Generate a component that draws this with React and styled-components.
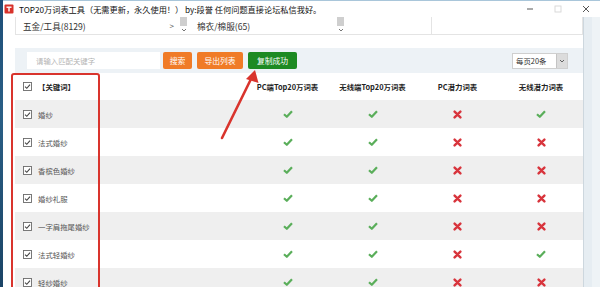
import styled, { createGlobalStyle } from "styled-components";

const GlobalStyle = createGlobalStyle`
  html, body {
    margin: 0;
    padding: 0;
    background: #ffffff;
  }
  body {
    font-family: "Noto Sans CJK SC", "Noto Sans", sans-serif;
    color: #333;
  }
`;

const Screen = styled.div`
  position: relative;
  display: flex;
  width: 600px;
  height: 287px;
  overflow: hidden;
`;

const Desktop = styled.div`
  width: 3px;
  background: linear-gradient(#1e4e78, #2a5f86 40%, #1b4466);
`;

const Window = styled.div`
  flex: 1;
  display: flex;
  flex-direction: column;
  background: #fff;
  border-top: 1px solid #a9c6da;
`;

const TitleBar = styled.div`
  flex-shrink: 0;
  height: 16px;
  display: flex;
  align-items: center;
  padding-left: 1px;
`;

const Title = styled.span`
  margin-left: 5px;
  font-size: 8.2px;
  color: #111;
  white-space: nowrap;
`;

const Controls = styled.div`
  margin-left: auto;
  display: flex;
  align-items: center;
  gap: 20px;
  padding-right: 10px;
`;

const Main = styled.div`
  flex: 1;
  display: flex;
  min-height: 0;
`;

const Content = styled.div`
  flex: 1;
  display: flex;
  flex-direction: column;
  padding-left: 12px;
  min-height: 0;
`;

const Gutter = styled.div`
  width: 16px;
  background: #e6edf2;
  border-left: 1px solid #cdd7de;
  box-shadow: inset -8px 0 0 #eef3f6;
`;

const CategoryBar = styled.div`
  flex-shrink: 0;
  height: 18px;
  display: flex;
  border: 1px solid #e4e4e4;
  border-top: none;
  box-sizing: border-box;
`;

const CategoryCol = styled.div`
  width: ${({ w }) => w}px;
  display: flex;
  align-items: center;
  padding-left: ${({ pad }) => pad || 0}px;
  box-sizing: border-box;
  border-right: ${({ line }) => (line ? "1px solid #e4e4e4" : "none")};
  font-size: 8.6px;
  color: #333;
`;

const Next = styled.span`
  margin-left: auto;
  margin-right: 6px;
  font-size: 8px;
  color: #555;
`;

const ScrollTrack = styled.div`
  align-self: stretch;
  width: 7px;
  margin-left: ${({ auto }) => (auto ? "auto" : "0")};
  margin-right: 1px;
  display: flex;
  flex-direction: column;
  align-items: center;
  justify-content: space-between;
  padding-bottom: 2px;
  box-sizing: border-box;
`;

const Thumb = styled.div`
  width: 7px;
  height: 9px;
  background: #cfcfcf;
`;

const Toolbar = styled.div`
  flex-shrink: 0;
  margin-top: 13px;
  height: 25px;
  display: flex;
  align-items: center;
  padding: 0 15px 0 12px;
  background: #edf2f6;
`;

const SearchInput = styled.div`
  width: 133px;
  height: 17px;
  box-sizing: border-box;
  background: #fff;
  display: flex;
  align-items: center;
  padding-left: 9px;
  font-size: 7.4px;
  color: #b3b3b3;
  margin-right: 3px;
`;

const Button = styled.div`
  width: ${({ w }) => w}px;
  height: 17px;
  margin-left: ${({ gap }) => gap || 0}px;
  display: flex;
  align-items: center;
  justify-content: center;
  border-radius: 2px;
  font-size: 7.8px;
  color: #fff;
  background: ${({ green }) => (green ? "#1d8a22" : "#f07b27")};
`;

const PageSelect = styled.div`
  margin-left: auto;
  display: flex;
  height: 14px;
  border: 1px solid #cfcfcf;
  background: #fff;
`;

const SelectText = styled.span`
  width: 40px;
  padding-left: 3px;
  font-size: 7.4px;
  line-height: 14px;
  color: #333;
`;

const SelectArrow = styled.span`
  width: 10px;
  display: flex;
  align-items: center;
  justify-content: center;
  background: #dcdcdc;
  border-left: 1px solid #c4c4c4;
`;

const Table = styled.div`
  position: relative;
  flex-shrink: 0;
`;

const Row = styled.div`
  display: grid;
  grid-template-columns: 230px repeat(3, 85px) 82px;
  height: ${({ head }) => (head ? 27 : 28)}px;
  align-items: center;
  background: ${({ gray }) => (gray ? "#efefef" : "#fff")};
  font-size: 7.4px;
  font-weight: ${({ head }) => (head ? 700 : 400)};
  color: ${({ head }) => (head ? "#222" : "#555")};
`;

const KeyCell = styled.div`
  display: flex;
  align-items: center;
  gap: 6px;
  padding-left: 8px;
`;

const Cell = styled.div`
  display: flex;
  justify-content: center;
  align-items: center;
  white-space: nowrap;
`;

const Highlight = styled.div`
  position: absolute;
  left: -4px;
  top: 0;
  width: 89px;
  height: 230px;
  box-sizing: border-box;
  border: 2px solid #d9342d;
  border-radius: 3px;
  pointer-events: none;
`;

const Overlay = styled.svg`
  position: absolute;
  left: 0;
  top: 0;
  pointer-events: none;
`;

const AppIcon = () => (
  <svg width="10" height="10" viewBox="0 0 10 10">
    <rect x="0.5" y="0.5" width="9" height="9" rx="1" fill="#d8322b" />
    <rect x="2.5" y="2.5" width="5" height="1.4" fill="#fff" />
    <rect x="4.3" y="3.5" width="1.4" height="4" fill="#fff" />
  </svg>
);

const Chevron = ({ color = "#666" }) => (
  <svg width="6" height="4" viewBox="0 0 6 4">
    <path d="M1 1 L3 3 L5 1" fill="none" stroke={color} strokeWidth="0.9" />
  </svg>
);

const CheckBox = () => (
  <svg width="9" height="9" viewBox="0 0 9 9">
    <rect x="0.5" y="0.5" width="8" height="8" fill="#fff" stroke="#6a6a6a" strokeWidth="0.9" />
    <path d="M2 4.6 L3.8 6.3 L7 2.6" fill="none" stroke="#444" strokeWidth="1.1" />
  </svg>
);

const Yes = () => (
  <svg width="10" height="8" viewBox="0 0 10 8">
    <path d="M1 4.2 L3.8 6.8 L9 1.2" fill="none" stroke="#5aae5a" strokeWidth="2.2" strokeLinejoin="round" />
  </svg>
);

const No = () => (
  <svg width="9" height="9" viewBox="0 0 9 9">
    <path d="M1.6 1.6 L7.4 7.4 M7.4 1.6 L1.6 7.4" stroke="#d8343c" strokeWidth="2.4" strokeLinecap="round" />
  </svg>
);

const rows = [
  { word: "婚纱", marks: [1, 1, 0, 1] },
  { word: "法式婚纱", marks: [1, 1, 0, 0] },
  { word: "香槟色婚纱", marks: [1, 1, 0, 0] },
  { word: "婚纱礼服", marks: [1, 1, 0, 0] },
  { word: "一字肩拖尾婚纱", marks: [1, 1, 0, 0] },
  { word: "法式轻婚纱", marks: [1, 1, 0, 1] },
  { word: "轻纱婚纱", marks: [1, 1, 0, 0] },
];

const columns = ["PC端Top20万词表", "无线端Top20万词表", "PC潜力词表", "无线潜力词表"];

export default function App() {
  return (
    <>
      <GlobalStyle />
      <Screen>
        <Desktop />
        <Window>
          <TitleBar>
            <AppIcon />
            <Title>TOP20万词表工具（无需更新，永久使用！） by:段誉 任何问题直接论坛私信我好。</Title>
            <Controls>
              <svg width="8" height="8" viewBox="0 0 8 8">
                <path d="M1 4 H7" stroke="#444" strokeWidth="0.9" />
              </svg>
              <svg width="8" height="8" viewBox="0 0 8 8">
                <rect x="1" y="1" width="6" height="6" fill="none" stroke="#d6d6d6" strokeWidth="0.9" />
              </svg>
              <svg width="8" height="8" viewBox="0 0 8 8">
                <path d="M1 1 L7 7 M7 1 L1 7" stroke="#444" strokeWidth="0.9" />
              </svg>
            </Controls>
          </TitleBar>
          <Main>
            <Content>
              <CategoryBar>
                <CategoryCol w={172} pad={7}>
                  五金/工具(8129)
                  <Next>&gt;</Next>
                  <ScrollTrack>
                    <Thumb />
                    <Chevron />
                  </ScrollTrack>
                </CategoryCol>
                <CategoryCol w={157} pad={9}>
                  棉衣/棉服(65)
                  <ScrollTrack auto>
                    <Thumb />
                    <Chevron />
                  </ScrollTrack>
                </CategoryCol>
                <CategoryCol w={87} line />
                <CategoryCol w={150} />
              </CategoryBar>

              <Toolbar>
                <SearchInput>请输入匹配关键字</SearchInput>
                <Button w={29}>搜索</Button>
                <Button w={46} gap={5}>导出列表</Button>
                <Button w={49} gap={5} green>复制成功</Button>
                <PageSelect>
                  <SelectText>每页20条</SelectText>
                  <SelectArrow>
                    <Chevron color="#555" />
                  </SelectArrow>
                </PageSelect>
              </Toolbar>

              <Table>
                <Row head>
                  <KeyCell>
                    <CheckBox />
                    【关键词】
                  </KeyCell>
                  {columns.map((c) => (
                    <Cell key={c}>{c}</Cell>
                  ))}
                </Row>
                {rows.map((r, i) => (
                  <Row key={r.word} gray={i % 2 === 0}>
                    <KeyCell>
                      <CheckBox />
                      {r.word}
                    </KeyCell>
                    {r.marks.map((m, j) => (
                      <Cell key={j}>{m ? <Yes /> : <No />}</Cell>
                    ))}
                  </Row>
                ))}
                <Highlight />
              </Table>
            </Content>
            <Gutter />
          </Main>
        </Window>
        <Overlay width="600" height="287" viewBox="0 0 600 287">
          <path d="M222 138 L251 79" stroke="#d9342d" strokeWidth="2.6" strokeLinecap="round" />
          <polygon points="255,70 258.5,83 246,79" fill="#d9342d" />
        </Overlay>
      </Screen>
    </>
  );
}
